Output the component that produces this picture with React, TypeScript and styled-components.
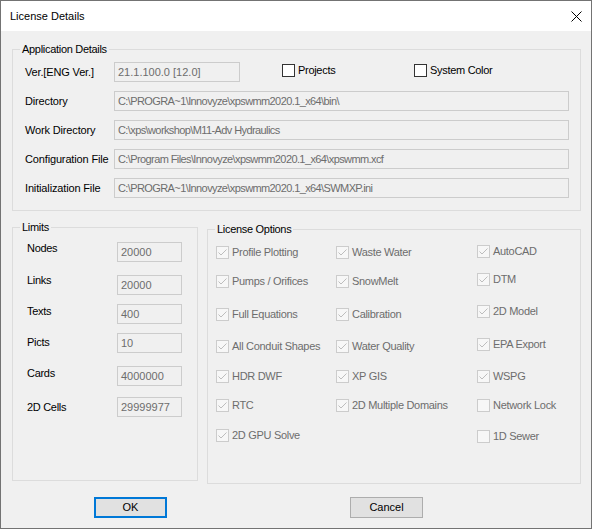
import React from "react";
import styled, { createGlobalStyle } from "styled-components";

const GlobalStyle = createGlobalStyle`
  html, body { margin: 0; padding: 0; background: #f0f0f0; }
  body { font-family: "Liberation Sans", Arial, sans-serif; font-size: 11px; color: #000; }
  * { box-sizing: border-box; }
`;

const Window = styled.div`
  width: 592px;
  height: 529px;
  border: 1px solid #737373;
  background: #f0f0f0;
  display: flex;
  flex-direction: column;
`;

const TitleBar = styled.div`
  height: 30px;
  flex: none;
  background: #ffffff;
  display: flex;
  align-items: center;
  justify-content: space-between;
  padding: 0 9px 0 9px;
`;

const Title = styled.span`
  font-size: 11px;
  line-height: 13px;
  color: #000;
`;

const CloseIcon = styled.svg`
  width: 11px;
  height: 11px;
  display: block;
  margin-top: 1px;
`;

const Content = styled.div`
  display: flex;
  flex-direction: column;
  padding: 18px 10px 0 11px;
`;

const Group = styled.div<{ $w?: number; $h?: number; $mt?: number }>`
  position: relative;
  border: 1px solid #dcdcdc;
  ${(p) => (p.$w ? `width: ${p.$w}px; flex: none;` : "")}
  ${(p) => (p.$h ? `height: ${p.$h}px;` : "")}
  margin-top: ${(p) => p.$mt ?? 0}px;
`;

const GroupTitle = styled.span`
  position: absolute;
  top: -7px;
  left: 7px;
  padding: 0 2px;
  background: #f0f0f0;
  line-height: 13px;
  letter-spacing: -0.3px;
`;

const AppBody = styled.div`
  display: flex;
  flex-direction: column;
  gap: 9px;
  padding: 12px 11px 12px 12px;
`;

const AppRow = styled.div`
  display: flex;
  align-items: center;
  height: 20px;
`;

const RowLabel = styled.span<{ $w: number }>`
  width: ${(p) => p.$w}px;
  flex: none;
  line-height: 13px;
  letter-spacing: -0.15px;
  white-space: nowrap;
`;

const Field = styled.div<{ $w?: number; $mt?: number; $tight?: boolean }>`
  height: 20px;
  ${(p) => (p.$w ? `width: ${p.$w}px; flex: none;` : "flex: 1;")}
  margin-top: ${(p) => p.$mt ?? 0}px;
  border: 1px solid #cccccc;
  background: #f0f0f0;
  color: #6d6d6d;
  padding: 0 3px;
  line-height: 18px;
  letter-spacing: ${(p) => (p.$tight ? "-0.6px" : "0")};
  white-space: nowrap;
  overflow: hidden;
`;

const CheckCell = styled.label<{ $w?: number; $ml?: number }>`
  display: flex;
  align-items: center;
  align-self: flex-start;
  margin-top: 2px;
  margin-left: ${(p) => p.$ml ?? 0}px;
  ${(p) => (p.$w ? `width: ${p.$w}px;` : "")}
`;

const Box = styled.span<{ $state: "on" | "off" | "disabled" }>`
  width: 13px;
  height: 13px;
  flex: none;
  display: block;
  border: 1px solid ${(p) => (p.$state === "on" ? "#333333" : "#cccccc")};
  background: ${(p) => (p.$state === "on" ? "#ffffff" : "#f7f7f7")};
`;

const CheckText = styled.span<{ $disabled?: boolean }>`
  margin-left: 3px;
  line-height: 11px;
  letter-spacing: -0.3px;
  white-space: nowrap;
  color: ${(p) => (p.$disabled ? "#6d6d6d" : "#000000")};
`;

const LowerRow = styled.div`
  display: flex;
  align-items: flex-start;
  gap: 9px;
  margin-top: 16px;
`;

const LimitsBody = styled.div`
  display: flex;
  padding-left: 14px;
`;

const LabelCol = styled.div`
  width: 90px;
  display: flex;
  flex-direction: column;
`;

const LimitLabel = styled.span<{ $mt: number }>`
  margin-top: ${(p) => p.$mt}px;
  line-height: 13px;
  letter-spacing: -0.3px;
`;

const FieldCol = styled.div`
  display: flex;
  flex-direction: column;
`;

const OptionsBody = styled.div`
  display: flex;
  padding-left: 8px;
`;

const OptionCol = styled.div<{ $w?: number }>`
  display: flex;
  flex-direction: column;
  ${(p) => (p.$w ? `width: ${p.$w}px;` : "")}
`;

const OptionItem = styled.div<{ $mt: number }>`
  display: flex;
  align-items: center;
  height: 13px;
  margin-top: ${(p) => p.$mt}px;
`;

const ButtonRow = styled.div`
  display: flex;
  gap: 183px;
  margin-top: 13px;
  padding-left: 82px;
`;

const Button = styled.button<{ $default?: boolean }>`
  width: 73px;
  height: 21px;
  padding: 0;
  margin: 0;
  background: #e1e1e1;
  border: ${(p) => (p.$default ? "2px solid #0078d7" : "1px solid #adadad")};
  font-family: "Liberation Sans", Arial, sans-serif;
  font-size: 11px;
  color: #000;
  line-height: 13px;
`;

const CheckMark = () => (
  <svg width="11" height="11" viewBox="0 0 11 11" style={{ display: "block" }}>
    <polyline points="1.5,5.5 4,8 9.5,2.5" fill="none" stroke="#bdbdbd" strokeWidth="1" />
  </svg>
);

type Opt = { label: string; checked: boolean; mt: number };

const col1: Opt[] = [
  { label: "Profile Plotting", checked: true, mt: 16 },
  { label: "Pumps / Orifices", checked: true, mt: 16 },
  { label: "Full Equations", checked: true, mt: 20 },
  { label: "All Conduit Shapes", checked: true, mt: 19 },
  { label: "HDR DWF", checked: true, mt: 17 },
  { label: "RTC", checked: true, mt: 16 },
  { label: "2D GPU Solve", checked: true, mt: 17 },
];
const col2: Opt[] = [
  { label: "Waste Water", checked: true, mt: 16 },
  { label: "SnowMelt", checked: true, mt: 16 },
  { label: "Calibration", checked: true, mt: 20 },
  { label: "Water Quality", checked: true, mt: 19 },
  { label: "XP GIS", checked: true, mt: 17 },
  { label: "2D Multiple Domains", checked: true, mt: 16 },
];
const col3: Opt[] = [
  { label: "AutoCAD", checked: true, mt: 15 },
  { label: "DTM", checked: true, mt: 15 },
  { label: "2D Model", checked: true, mt: 19 },
  { label: "EPA Export", checked: true, mt: 20 },
  { label: "WSPG", checked: true, mt: 19 },
  { label: "Network Lock", checked: false, mt: 16 },
  { label: "1D Sewer", checked: false, mt: 18 },
];

const limits = [
  { label: "Nodes", value: "20000", lmt: 14, fmt: 14 },
  { label: "Links", value: "20000", lmt: 19, fmt: 13 },
  { label: "Texts", value: "400", lmt: 18, fmt: 9 },
  { label: "Picts", value: "10", lmt: 18, fmt: 9 },
  { label: "Cards", value: "4000000", lmt: 18, fmt: 13 },
  { label: "2D Cells", value: "29999977", lmt: 21, fmt: 11 },
];

const paths = [
  { label: "Directory", value: "C:\\PROGRA~1\\Innovyze\\xpswmm2020.1_x64\\bin\\" },
  { label: "Work Directory", value: "C:\\xps\\workshop\\M11-Adv Hydraulics" },
  { label: "Configuration File", value: "C:\\Program Files\\Innovyze\\xpswmm2020.1_x64\\xpswmm.xcf" },
  { label: "Initialization File", value: "C:\\PROGRA~1\\Innovyze\\xpswmm2020.1_x64\\SWMXP.ini" },
];

const OptionList = ({ items, w }: { items: Opt[]; w?: number }) => (
  <OptionCol $w={w}>
    {items.map((o) => (
      <OptionItem key={o.label} $mt={o.mt}>
        <Box $state="disabled">{o.checked && <CheckMark />}</Box>
        <CheckText $disabled>{o.label}</CheckText>
      </OptionItem>
    ))}
  </OptionCol>
);

export default function App() {
  return (
    <>
      <GlobalStyle />
      <Window>
        <TitleBar>
          <Title>License Details</Title>
          <CloseIcon viewBox="0 0 11 11">
            <path d="M0.5 0.5 L10.5 10.5 M10.5 0.5 L0.5 10.5" stroke="#000" strokeWidth="1" fill="none" />
          </CloseIcon>
        </TitleBar>
        <Content>
          <Group>
            <GroupTitle>Application Details</GroupTitle>
            <AppBody>
              <AppRow>
                <RowLabel $w={89}>Ver.[ENG Ver.]</RowLabel>
                <Field $w={126}>21.1.100.0 [12.0]</Field>
                <CheckCell $ml={42} $w={132}>
                  <Box $state="on" />
                  <CheckText>Projects</CheckText>
                </CheckCell>
                <CheckCell>
                  <Box $state="on" />
                  <CheckText>System Color</CheckText>
                </CheckCell>
              </AppRow>
              {paths.map((p) => (
                <AppRow key={p.label}>
                  <RowLabel $w={89}>{p.label}</RowLabel>
                  <Field $tight>{p.value}</Field>
                </AppRow>
              ))}
            </AppBody>
          </Group>
          <LowerRow>
            <Group $w={186} $h={254}>
              <GroupTitle>Limits</GroupTitle>
              <LimitsBody>
                <LabelCol>
                  {limits.map((l) => (
                    <LimitLabel key={l.label} $mt={l.lmt}>
                      {l.label}
                    </LimitLabel>
                  ))}
                </LabelCol>
                <FieldCol>
                  {limits.map((l) => (
                    <Field key={l.label} $w={65} $mt={l.fmt}>
                      {l.value}
                    </Field>
                  ))}
                </FieldCol>
              </LimitsBody>
            </Group>
            <Group $w={374} $h={255} $mt={2}>
              <GroupTitle>License Options</GroupTitle>
              <OptionsBody>
                <OptionList items={col1} w={120} />
                <OptionList items={col2} w={141} />
                <OptionList items={col3} />
              </OptionsBody>
            </Group>
          </LowerRow>
          <ButtonRow>
            <Button $default>OK</Button>
            <Button>Cancel</Button>
          </ButtonRow>
        </Content>
      </Window>
    </>
  );
}
